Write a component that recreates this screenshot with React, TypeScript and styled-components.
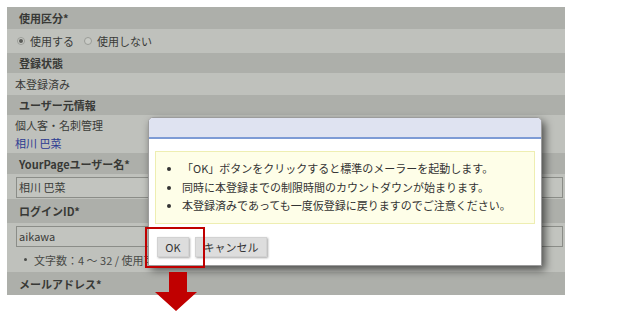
import React from "react";
import styled, { createGlobalStyle } from "styled-components";

const GlobalStyle = createGlobalStyle`
  html, body { margin: 0; padding: 0; background: #ffffff; }
  body {
    font-family: "Noto Sans CJK JP", "Noto Sans", sans-serif;
    color: #3a3b38;
  }
  * { box-sizing: border-box; }
`;

const Stage = styled.div`
  position: relative;
  width: 640px;
  height: 316px;
  padding: 7px 0 0 7px;
  overflow: hidden;
`;

const Panel = styled.div`
  width: 558px;
  height: 288px;
  background: #bfc1bc;
  display: flex;
  flex-direction: column;
  overflow: hidden;
`;

const Header = styled.div<{ $h: number }>`
  height: ${(p) => p.$h}px;
  flex: none;
  background: #adafaa;
  display: flex;
  align-items: center;
  padding-left: 12px;
  font-size: 11px;
  font-weight: bold;
  color: #383936;
  white-space: nowrap;
`;

const Content = styled.div<{ $h: number }>`
  height: ${(p) => p.$h}px;
  flex: none;
  display: flex;
  flex-direction: column;
  justify-content: center;
  padding-left: 8px;
  font-size: 11px;
  line-height: 18px;
  color: #3a3b38;
  white-space: nowrap;
`;

const RadioRow = styled.div`
  display: flex;
  align-items: center;
  gap: 5px;
`;

const Radio = styled.span<{ $on?: boolean }>`
  width: 8px;
  height: 8px;
  border-radius: 50%;
  border: 1px solid #9a9c97;
  background: #c9cbc6;
  display: inline-flex;
  align-items: center;
  justify-content: center;
  margin-left: ${(p) => (p.$on ? "2px" : "5px")};
  &::after {
    content: "";
    width: 4px;
    height: 4px;
    border-radius: 50%;
    background: ${(p) => (p.$on ? "#5a5c58" : "transparent")};
  }
`;

const BlueText = styled.span`
  color: #2c3a92;
`;

const InputRow = styled.div<{ $h: number }>`
  height: ${(p) => p.$h}px;
  flex: none;
  padding: 3px 0 0 9px;
`;

const Input = styled.div`
  width: 547px;
  height: 21px;
  border: 1px solid #8b8d88;
  background: #c2c4bf;
  font-size: 11px;
  line-height: 19px;
  padding-left: 2px;
  color: #3a3b38;
  white-space: nowrap;
`;

const NoteRow = styled.div<{ $h: number }>`
  height: ${(p) => p.$h}px;
  flex: none;
  display: flex;
  align-items: center;
  padding-left: 17px;
  gap: 7px;
  font-size: 11px;
  color: #4a4b48;
  white-space: nowrap;
  &::before {
    content: "";
    width: 3px;
    height: 3px;
    border-radius: 50%;
    background: #4a4b48;
  }
`;

const Dialog = styled.div`
  position: absolute;
  left: 148px;
  top: 117px;
  width: 394px;
  height: 149px;
  background: #ffffff;
  border: 1px solid #9c9c9c;
  border-radius: 5px 5px 0 0;
  box-shadow: 3px 4px 9px rgba(0, 0, 0, 0.6);
  display: flex;
  flex-direction: column;
  color: #333333;
`;

const TitleBar = styled.div`
  height: 21px;
  flex: none;
  background: #dfe3f1;
  border-bottom: 2px solid #7d9bd5;
  border-radius: 4px 4px 0 0;
`;

const DialogBody = styled.div`
  padding: 12px 6px 0 6px;
  display: flex;
  flex-direction: column;
`;

const NoteBox = styled.div`
  height: 73px;
  background: #fefee8;
  border: 1px solid #eeeeb2;
`;

const NoteList = styled.ul`
  margin: 0;
  padding: 7px 0 0 26px;
  font-size: 11px;
  line-height: 18.5px;
  color: #333333;
  white-space: nowrap;
  li::marker {
    font-size: 10px;
  }
`;

const ButtonRow = styled.div`
  display: flex;
  gap: 6px;
  margin-top: 13px;
  padding-left: 2px;
`;

const Button = styled.div<{ $w: number }>`
  width: ${(p) => p.$w}px;
  height: 20px;
  background: #dddddd;
  border: 1px solid #d2d2d2;
  box-shadow: 1px 1px 2px rgba(0, 0, 0, 0.35);
  font-size: 11px;
  line-height: 18px;
  color: #333333;
  display: flex;
  align-items: center;
  justify-content: center;
`;

const Highlight = styled.div`
  position: absolute;
  left: 145px;
  top: 227px;
  width: 60px;
  height: 41px;
  border: 2px solid #c00000;
`;

const Arrow = styled.svg`
  position: absolute;
  left: 155px;
  top: 272px;
`;

export default function App() {
  return (
    <>
      <GlobalStyle />
      <Stage>
        <Panel>
          <Header $h={22}>使用区分*</Header>
          <Content $h={24}>
            <RadioRow>
              <Radio $on />
              <span>使用する</span>
              <Radio />
              <span>使用しない</span>
            </RadioRow>
          </Content>
          <Header $h={20}>登録状態</Header>
          <Content $h={22}>本登録済み</Content>
          <Header $h={20}>ユーザー元情報</Header>
          <Content $h={38}>
            <span>個人客・名刺管理</span>
            <BlueText>相川 巴菜</BlueText>
          </Content>
          <Header $h={21}>YourPageユーザー名*</Header>
          <InputRow $h={25}>
            <Input>相川 巴菜</Input>
          </InputRow>
          <Header $h={24}>ログインID*</Header>
          <InputRow $h={24}>
            <Input>aikawa</Input>
          </InputRow>
          <NoteRow $h={25}>文字数：4 ～ 32 / 使用可</NoteRow>
          <Header $h={23}>メールアドレス*</Header>
        </Panel>

        <Dialog>
          <TitleBar />
          <DialogBody>
            <NoteBox>
              <NoteList>
                <li>「OK」ボタンをクリックすると標準のメーラーを起動します。</li>
                <li>同時に本登録までの制限時間のカウントダウンが始まります。</li>
                <li>本登録済みであっても一度仮登録に戻りますのでご注意ください。</li>
              </NoteList>
            </NoteBox>
            <ButtonRow>
              <Button $w={32}>OK</Button>
              <Button $w={72}>キャンセル</Button>
            </ButtonRow>
          </DialogBody>
        </Dialog>

        <Highlight />
        <Arrow width="42" height="40" viewBox="0 0 42 40">
          <polygon points="14,0 32,0 32,20 42,20 21,39 0,20 14,20" fill="#c00000" />
        </Arrow>
      </Stage>
    </>
  );
}
